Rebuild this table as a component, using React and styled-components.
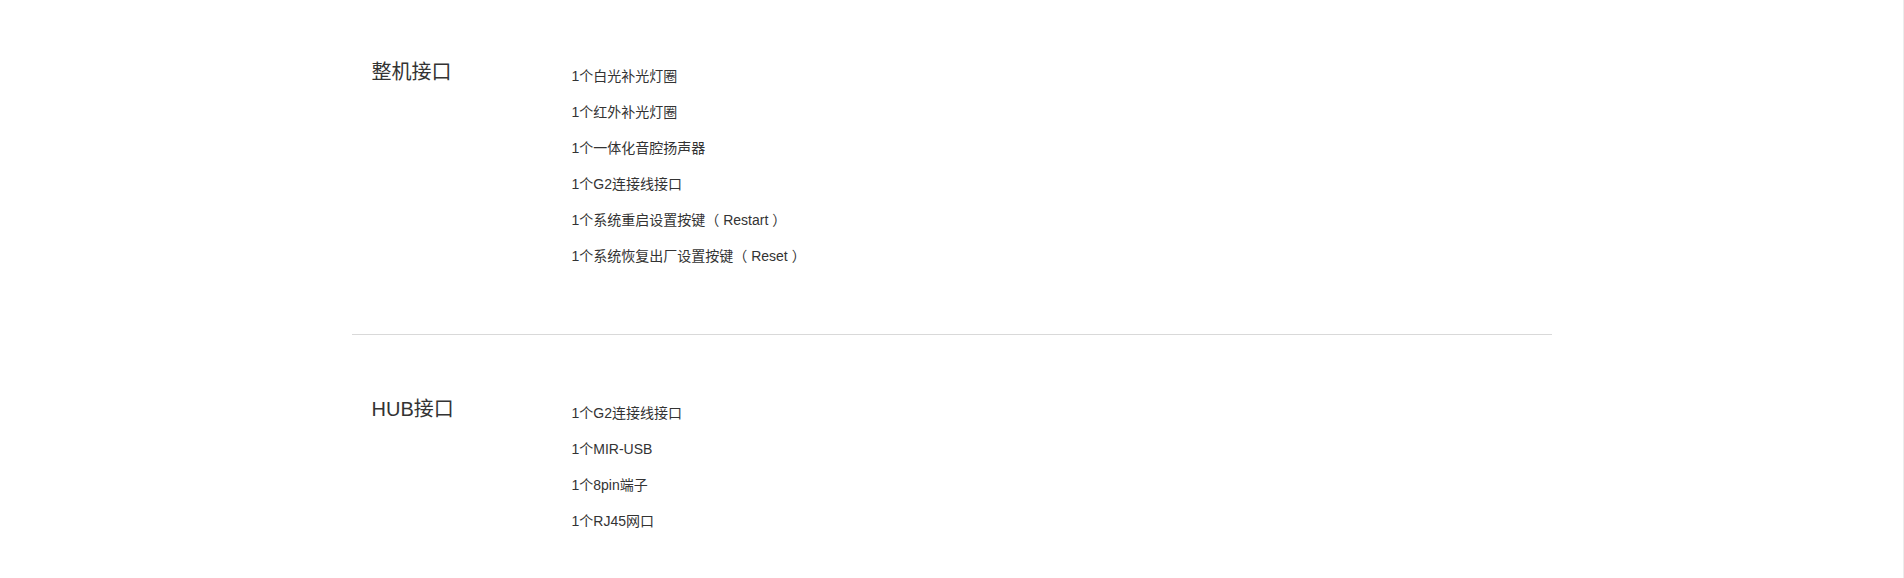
import React from "react";
import styled, { createGlobalStyle } from "styled-components";

const GlobalStyle = createGlobalStyle`
  html, body {
    margin: 0;
    padding: 0;
    background: #fff;
  }
  body {
    font-family: "Liberation Sans", "Noto Sans CJK SC", sans-serif;
    color: #333;
    border-right: 1px solid #ececec;
    min-height: 578px;
    box-sizing: border-box;
  }
`;

const SPECS = [
  {
    title: "整机接口",
    items: [
      "1个白光补光灯圈",
      "1个红外补光灯圈",
      "1个一体化音腔扬声器",
      "1个G2连接线接口",
      "1个系统重启设置按键（ Restart ）",
      "1个系统恢复出厂设置按键（ Reset ）",
    ],
  },
  {
    title: "HUB接口",
    items: ["1个G2连接线接口", "1个MIR-USB", "1个8pin端子", "1个RJ45网口"],
  },
];

const App = () => {
  return (
    <>
      <GlobalStyle />
      <Wrapper>
        {SPECS.map((spec, i) => (
          <Section
            key={spec.title}
            first={i === 0}
            last={i === SPECS.length - 1}
          >
            <Title>{spec.title}</Title>
            <List>
              {spec.items.map((item) => (
                <Item key={item}>{item}</Item>
              ))}
            </List>
          </Section>
        ))}
      </Wrapper>
    </>
  );
};

const Wrapper = styled.div`
  width: 1200px;
  margin: 0 auto;
`;

const Section = styled.section`
  display: flex;
  padding: ${(p) => (p.first ? "58px" : "60px")} 0 60px 20px;
  border-bottom: ${(p) => (p.last ? "none" : "1px solid #d9d9d9")};
`;

const Title = styled.h3`
  width: 200px;
  flex-shrink: 0;
  margin: 0;
  font-size: 20px;
  font-weight: 400;
  line-height: 28px;
  color: #333;
`;

const List = styled.ul`
  list-style: none;
  margin: 0;
  padding: 0;
`;

const Item = styled.li`
  font-size: 14px;
  line-height: 36px;
  color: #333;
`;

export default App;
